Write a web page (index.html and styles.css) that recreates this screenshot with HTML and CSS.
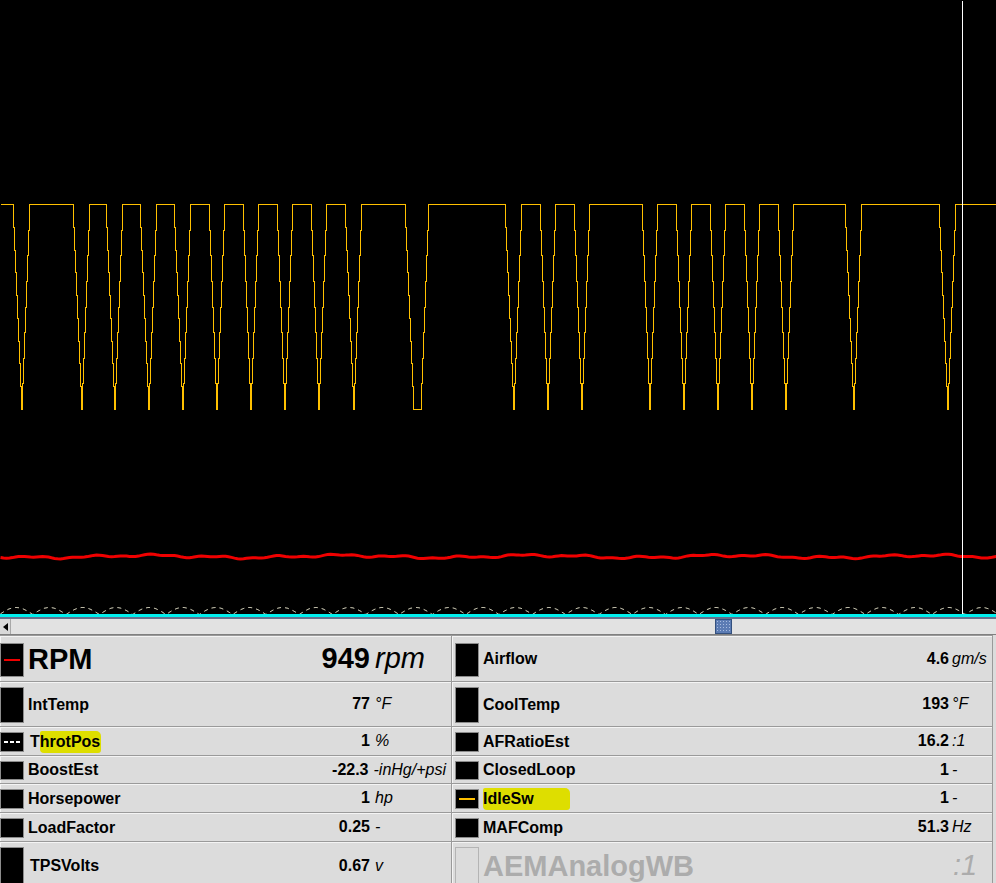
FILE: index.html
```html
<!DOCTYPE html>
<html>
<head>
  <title>Logger</title>
  <link rel="stylesheet" href="styles.css">
</head>
<body>
  <div class="chart">
    <svg width="996" height="614" class="plot">
      <g transform="translate(0.5,0.5)">
        <path id="idleTrace" class="trace-idle" d=""></path>
        <path id="rpmTrace" class="trace-rpm" d=""></path>
        <path id="tpsTrace" class="trace-tps" d=""></path>
        <line x1="962" y1="0" x2="962" y2="614" class="cursor"></line>
      </g>
    </svg>
  </div>
  <div class="axis-line"></div>
  <div class="scrollbar">
    <div class="scroll-btn"><span class="arrow-left"></span></div>
    <div class="scroll-track">
      <div class="scroll-thumb"></div>
    </div>
  </div>

  <div class="gauges">
    <div class="cell big left">
      <span class="swatch"><i class="mark mark-red"></i></span>
      <span class="label">RPM</span>
      <span class="num">949</span>
      <span class="unit">rpm</span>
    </div>
    <div class="cell big right">
      <span class="swatch"></span>
      <span class="label">Airflow</span>
      <span class="num">4.6</span>
      <span class="unit">gm/s</span>
    </div>

    <div class="cell tall left">
      <span class="swatch"></span>
      <span class="label">IntTemp</span>
      <span class="num">77</span>
      <span class="unit">°F</span>
    </div>
    <div class="cell tall right">
      <span class="swatch"></span>
      <span class="label">CoolTemp</span>
      <span class="num">193</span>
      <span class="unit">°F</span>
    </div>

    <div class="cell left">
      <span class="swatch"><i class="mark mark-dash"></i></span>
      <span class="label shift">T<span class="hl">hrotPos</span></span>
      <span class="num">1</span>
      <span class="unit">%</span>
    </div>
    <div class="cell right">
      <span class="swatch"></span>
      <span class="label">AFRatioEst</span>
      <span class="num">16.2</span>
      <span class="unit">:1</span>
    </div>

    <div class="cell left">
      <span class="swatch"></span>
      <span class="label">BoostEst</span>
      <span class="num">-22.3</span>
      <span class="unit">-inHg/+psi</span>
    </div>
    <div class="cell right">
      <span class="swatch"></span>
      <span class="label">ClosedLoop</span>
      <span class="num">1</span>
      <span class="unit">-</span>
    </div>

    <div class="cell left">
      <span class="swatch"></span>
      <span class="label">Horsepower</span>
      <span class="num">1</span>
      <span class="unit">hp</span>
    </div>
    <div class="cell right">
      <span class="swatch"><i class="mark mark-amber"></i></span>
      <span class="label"><span class="hl hl-wide">IdleSw</span></span>
      <span class="num">1</span>
      <span class="unit">-</span>
    </div>

    <div class="cell left">
      <span class="swatch"></span>
      <span class="label">LoadFactor</span>
      <span class="num">0.25</span>
      <span class="unit">-</span>
    </div>
    <div class="cell right">
      <span class="swatch"></span>
      <span class="label">MAFComp</span>
      <span class="num">51.3</span>
      <span class="unit">Hz</span>
    </div>

    <div class="cell last left">
      <span class="swatch"></span>
      <span class="label shift">TPSVolts</span>
      <span class="num">0.67</span>
      <span class="unit">v</span>
    </div>
    <div class="cell last right disabled">
      <span class="swatch empty"></span>
      <span class="label">AEMAnalogWB</span>
      <span class="num"></span>
      <span class="unit">:1</span>
    </div>
  </div>

  <script>
    (function () {
      // IdleSw trace: plateaus (x ranges at high level), stepped dips between them
      const plateaus = [[0,13],[30,73],[90,106],[123,140],[157,174],[191,209],[225,243],[259,277],
        [293,311],[327,345],[362,405],[429,505],[522,540],[556,574],[590,642],[658,676],[692,710],
        [726,744],[760,778],[794,845],[862,939],[956,996]];
      const yHigh = 204, yLow = 409;

      let d = 'M0,' + yHigh;
      plateaus.forEach((p, i) => {
        d += ' H' + p[1];
        const next = plateaus[i + 1];
        if (!next) return;
        const w = next[0] - p[1];
        const flat = Math.max(0, w - 17);
        const nL = Math.ceil((w - flat) / 2);
        const nR = w - flat - nL;
        let x = p[1];
        for (let k = 1; k <= nL; k++) {
          d += ' V' + Math.round(yHigh + (yLow - yHigh) * k / nL);
          if (k < nL) { x++; d += ' H' + x; }
        }
        x += flat + 1;
        d += ' H' + x;
        for (let k = 1; k <= nR; k++) {
          d += ' V' + Math.round(yLow - (yLow - yHigh) * k / nR);
          x++;
          d += ' H' + x;
        }
      });
      document.getElementById('idleTrace').setAttribute('d', d);

      // RPM trace: small wobble around y=556
      let r = '';
      for (let x = 0; x <= 996; x += 3) {
        const y = 556 + 1.1 * Math.sin(x / 31) + 0.9 * Math.sin(x / 9.7 + 1.3) + 0.6 * Math.sin(x / 4.1);
        r += (x ? ' L' : 'M') + x + ',' + y.toFixed(1);
      }
      document.getElementById('rpmTrace').setAttribute('d', r);

      // ThrotPos trace: dashed humps along the bottom
      let t = '';
      for (let x = 0; x <= 996; x++) {
        const y = 614 - 7 * Math.abs(Math.sin(Math.PI * (x + 1) / 33.3));
        t += (x ? ' L' : 'M') + x + ',' + y.toFixed(1);
      }
      document.getElementById('tpsTrace').setAttribute('d', t);
    })();
  </script>
</body>
</html>
```

FILE: styles.css
```css
* {
  margin: 0;
  padding: 0;
  box-sizing: border-box;
}

body {
  width: 996px;
  height: 883px;
  overflow: hidden;
  background: #dcdcdc;
  font-family: "Liberation Sans", Arial, sans-serif;
  color: #000;
}

.chart {
  height: 614px;
  background: #000;
}

.plot {
  display: block;
}

.trace-idle {
  fill: none;
  stroke: #ffc000;
  stroke-width: 1;
  shape-rendering: crispEdges;
}

.trace-rpm {
  fill: none;
  stroke: #f00000;
  stroke-width: 3;
}

.trace-tps {
  fill: none;
  stroke: #fffbe0;
  stroke-width: 1;
  stroke-dasharray: 4 4;
}

.cursor {
  stroke: #fff;
  stroke-width: 1;
  shape-rendering: crispEdges;
}

.axis-line {
  height: 3px;
  background: #00f0f0;
}

.scrollbar {
  height: 18px;
  display: flex;
  border-top: 2px solid #66708c;
  border-bottom: 1px solid #808080;
  background: #e2e2e2;
}

.scroll-btn {
  width: 11px;
  background: #d8d8d8;
  border-right: 1px solid #a8a8a8;
  display: flex;
  align-items: center;
  justify-content: center;
}

.arrow-left {
  width: 0;
  height: 0;
  border-top: 4px solid transparent;
  border-bottom: 4px solid transparent;
  border-right: 5px solid #000;
}

.scroll-track {
  flex: 1;
  position: relative;
}

.scroll-thumb {
  position: absolute;
  left: 704px;
  top: 0;
  width: 17px;
  height: 15px;
  background: #5c7cb4;
  border: 1px solid #33507e;
  background-image: radial-gradient(#a8bce0 0.7px, transparent 0.9px);
  background-size: 3px 3px;
}

.gauges {
  display: grid;
  grid-template-columns: 452px 541px;
  grid-template-rows: 46px 45px 29px 28px 29px 29px 48px;
}

.cell {
  display: flex;
  align-items: center;
  border-top: 1px solid #9a9a9a;
  border-right: 1px solid #9a9a9a;
  box-shadow: inset 1px 1px 0 #f4f4f4;
  font-size: 16px;
  font-weight: bold;
  white-space: nowrap;
}

.swatch {
  align-self: stretch;
  width: 24px;
  margin: 5px 4px 3px 0;
  background: #000;
  border: 1px solid #8c8c8c;
  display: flex;
  align-items: center;
  justify-content: center;
}

.right .swatch {
  margin-left: 3px;
}

.big .swatch {
  margin-top: 7px;
  margin-bottom: 4px;
}

.last .swatch {
  margin-bottom: 0;
}

.swatch.empty {
  background: transparent;
  border-color: #b4b4b4;
}

.mark {
  display: block;
  width: 16px;
  height: 2px;
}

.mark-red {
  background: #f00000;
}

.mark-amber {
  background: #ffc000;
}

.mark-dash {
  height: 2px;
  background: repeating-linear-gradient(90deg, #fff 0 4px, transparent 4px 6px);
}

.label {
  flex: 1;
  padding-top: 1px;
}

.label.shift {
  padding-left: 2px;
}

.hl {
  background: #dede00;
  padding: 2px 1px 3px 0;
  border-radius: 2px 5px 3px 4px;
}

.hl-wide {
  padding-right: 36px;
}

.num {
  text-align: right;
}

.unit {
  font-weight: normal;
  font-style: italic;
  margin-left: 5px;
  margin-right: 5px;
}

.left .unit {
  min-width: 71px;
}

.right .unit {
  min-width: 35px;
  margin-left: 3px;
}

.big.left {
  font-size: 29px;
}

.disabled {
  color: #acacac;
  font-size: 29px;
}

.disabled .unit {
  padding-left: 1px;
}
```
